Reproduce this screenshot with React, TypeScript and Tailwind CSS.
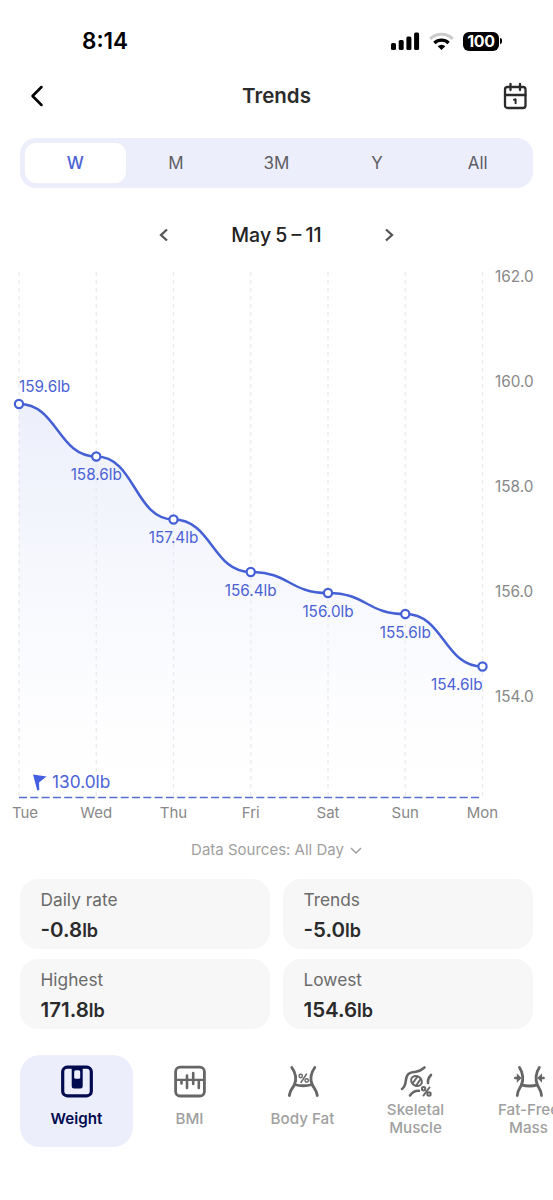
import clsx from "clsx";
import type { ReactNode } from "react";

const ranges = ["W", "M", "3M", "Y", "All"];

const points = [
  { day: "Tue", value: 159.6 },
  { day: "Wed", value: 158.6 },
  { day: "Thu", value: 157.4 },
  { day: "Fri", value: 156.4 },
  { day: "Sat", value: 156.0 },
  { day: "Sun", value: 155.6 },
  { day: "Mon", value: 154.6 },
];

const ticks = [162, 160, 158, 156, 154];

const stats = [
  { label: "Daily rate", value: "-0.8" },
  { label: "Trends", value: "-5.0" },
  { label: "Highest", value: "171.8" },
  { label: "Lowest", value: "154.6" },
];

const metrics: { label: string; icon: ReactNode; active?: boolean }[] = [
  { label: "Weight", icon: <WeightIcon />, active: true },
  { label: "BMI", icon: <BmiIcon /> },
  { label: "Body Fat", icon: <BodyFatIcon /> },
  { label: "Skeletal Muscle", icon: <MuscleIcon /> },
  { label: "Fat-Free Mass", icon: <FatFreeIcon /> },
];

function WeightIcon() {
  return (
    <svg width="36" height="36" viewBox="0 0 36 36" fill="none">
      <rect x="3.7" y="3.2" width="28.6" height="28.6" rx="4.5" stroke="currentColor" strokeWidth="3.2" />
      <path d="M12.7 4h11v18a2.5 2.5 0 0 1-2.5 2.5h-6a2.5 2.5 0 0 1-2.5-2.5z" fill="currentColor" />
      <rect x="15.2" y="6.3" width="6" height="8.5" rx="1.5" fill="#eceefc" />
    </svg>
  );
}

function BmiIcon() {
  return (
    <svg width="36" height="36" viewBox="0 0 36 36" fill="none" stroke="currentColor" strokeWidth="2.8" strokeLinecap="round">
      <rect x="3.6" y="3.2" width="28.8" height="28.8" rx="4.5" />
      <path d="M4 15.8h28" strokeWidth="2.2" />
      <path d="M9.5 16.5v3M15 11.5v12.5M21.200 9v11M26.800 16.500v7.500" strokeWidth="2.600" />
    </svg>
  );
}

function BodyFatIcon() {
  return (
    <svg width="36" height="36" viewBox="0 0 36 36" fill="none" stroke="currentColor" strokeWidth="2.8" strokeLinecap="round">
      <path d="M6.800 3.500c4 5.500 5 12 2.500 17.500-2 3.500-4.500 5.500-5 10.500" />
      <path d="M29.800 3.500c-4 5.500-5 12-2.500 17.500 2 3.500 4.500 5.500 5 10.500" />
      <path d="M9.500 20.500c6 1.700 11.600 1.700 17.600 0" />
      <g strokeWidth="1.400">
        <circle cx="15.700" cy="12" r="1.700" />
        <circle cx="21.700" cy="16.500" r="1.700" />
        <path d="M21.500 10l-5.500 8.500" />
      </g>
    </svg>
  );
}

function MuscleIcon() {
  return (
    <svg width="36" height="36" viewBox="0 0 36 36" fill="none" stroke="currentColor" strokeWidth="2.600" strokeLinecap="round">
      <path d="M4 25c3.500-2.500 3.500-5.500 4-9.500C8.700 9.500 12 8.200 18 7.700c4-.4 6-2 8.500-4.200" />
      <path d="M33 11c-2.300 2.300-3.300 4.500-3 8" />
      <path d="M12 31.500c2.500-3.500 4.500-5 9-4.700" />
      <g strokeWidth="2">
        <ellipse cx="18.500" cy="17" rx="5.700" ry="4.700" transform="rotate(35 18.500 17)" />
        <path d="M19.500 12.500l-4.700 6.500M22.500 15.300l-4.500 6.500" />
        <circle cx="25.600" cy="24.800" r="1.700" />
        <circle cx="31" cy="30" r="1.700" />
        <path d="M31.500 23.500l-6 8" />
      </g>
    </svg>
  );
}

function FatFreeIcon() {
  return (
    <svg width="36" height="36" viewBox="0 0 36 36" fill="none" stroke="currentColor" strokeWidth="2.800" strokeLinecap="round">
      <path d="M8.500 3.500c3.500 5.500 4 12 2 17.500-2 3.500-4 5.500-4.200 10.500" />
      <path d="M28.300 3.500c-3.500 5.500-4 12-2 17.500 2 3.500 4 5.500 4.200 10.500" />
      <path d="M10.500 20.800c5 1.500 10.800 1.500 15.800 0" />
      <path d="M4.200 14h4M32.600 14h-4" strokeWidth="2.500" />
      <path d="M6.500 11L9.500 14l-3 3zM30.300 11L27.300 14l3 3z" fill="currentColor" strokeWidth="1.400" />
    </svg>
  );
}

function StatusBar() {
  return (
    <div className="flex h-[60px] items-center justify-between pl-[82px] pr-[51px] pt-[22px] text-black">
      <span className="text-[22.5px] font-semibold leading-none">8:14</span>
      <div className="flex items-center">
        <svg width="29" height="18" viewBox="0 0 29 18" fill="currentColor">
          <rect x="0" y="11" width="5" height="7" rx="1.500" />
          <rect x="7.700" y="8" width="5" height="10" rx="1.500" />
          <rect x="15.400" y="4.500" width="5" height="13.500" rx="1.500" />
          <rect x="23.100" y="0.500" width="5" height="17.500" rx="1.500" />
        </svg>
        <svg className="ml-[9px]" width="25" height="18" viewBox="0 0 25 18" fill="none" strokeWidth="3.200">
          <path d="M1.300 6.800a16 16 0 0 1 22.400 0" stroke="#cbcbcb" />
          <path d="M5.400 11a10.200 10.200 0 0 1 14.200 0" stroke="currentColor" />
          <path d="M8.700 14.200a5.500 5.500 0 0 1 7.600 0L12.500 18z" fill="currentColor" />
        </svg>
        <div className="ml-[9px] flex h-[19px] w-9 items-center justify-center rounded-[6px] bg-black text-[16px] font-bold leading-[19px] tracking-[-0.3px] text-white">
          100
        </div>
        <div className="ml-px h-[6px] w-[2px] rounded-r-full bg-black" />
      </div>
    </div>
  );
}

function Header() {
  return (
    <div className="flex h-[72px] items-center justify-between pl-[29px] pr-[25px] text-[#2b2b2b]">
      <svg width="22" height="24" viewBox="0 0 22 24" fill="none" stroke="#000" strokeWidth="2.500" strokeLinecap="round" strokeLinejoin="round">
        <path d="M12.500 3L3.500 12l9 9" />
      </svg>
      <h1 className="pt-px text-[20.5px] font-semibold">Trends</h1>
      <svg width="26" height="28" viewBox="0 0 26 28" fill="none" stroke="currentColor" strokeWidth="2.300" strokeLinecap="round" strokeLinejoin="round">
        <rect x="3" y="5" width="20.500" height="21" rx="2.500" />
        <path d="M3 13h20.500M8.500 2v6M18 2v6" />
        <path d="M12 17.700l1.600-.4v4" strokeWidth="2" />
      </svg>
    </div>
  );
}

const TOP = 260;
const BASE = 797.5 - TOP;
const xAt = (i: number) => 19 + i * 77.25;
const yAt = (value: number) => 278 - TOP + (162 - value) * 52.5;

function TrendChart() {
  const line = points.reduce((d, p, i) => {
    if (i === 0) return `M${xAt(0)} ${yAt(p.value)}`;
    const mid = (xAt(i - 1) + xAt(i)) / 2;
    return `${d} C${mid} ${yAt(points[i - 1].value)} ${mid} ${yAt(p.value)} ${xAt(i)} ${yAt(p.value)}`;
  }, "");

  return (
    <svg className="block" width="553" height="570" viewBox="0 0 553 570">
      <defs>
        <linearGradient id="area" x1="0" y1="0" x2="0" y2="1">
          <stop offset="0" stopColor="#4464d8" stopOpacity="0.1" />
          <stop offset="0.4" stopColor="#4464d8" stopOpacity="0.05" />
          <stop offset="0.8" stopColor="#4464d8" stopOpacity="0.01" />
          <stop offset="1" stopColor="#4464d8" stopOpacity="0" />
        </linearGradient>
      </defs>
      <path d={`${line} V${BASE} H${xAt(0)} Z`} fill="url(#area)" />
      {points.map((p, i) => (
        <line key={p.day} x1={xAt(i)} x2={xAt(i)} y1="12" y2={BASE} stroke="#e8e8ee" strokeWidth="1.2" strokeDasharray="4 4" />
      ))}
      <line x1="19" x2="480" y1={BASE} y2={BASE} stroke="#5570d0" strokeWidth="1.7" strokeDasharray="8 3.3" />
      <path d={line} fill="none" stroke="#4460d4" strokeWidth="2.500" />

      {points.map((p, i) => (
        <g key={p.day}>
          <circle cx={xAt(i)} cy={yAt(p.value)} r="4.100" fill="#fff" stroke="#4460d4" strokeWidth="2.200" />
          <text
            x={xAt(i)}
            y={i === 0 ? yAt(p.value) - 12 : yAt(p.value) + 23.5}
            textAnchor={i === 0 ? "start" : i === points.length - 1 ? "end" : "middle"}
            fill="#4b62d5"
            fontSize="15.3"
          >
            {p.value.toFixed(1)}lb
          </text>
          <text x={i === 0 ? 25 : xAt(i)} y="558" textAnchor="middle" fill="#888" fontSize="15">
            {p.day}
          </text>
        </g>
      ))}

      {ticks.map((tick) => (
        <text key={tick} x="495" y={yAt(tick) + 4} fill="#888" fontSize="15.3">
          {tick.toFixed(1)}
        </text>
      ))}

      {/* Goal marker */}
      <path d="M33 514.500l13.500 2-7.500 6 .300 7.500-2 .500z" fill="#4460e0" />
      <text x="52" y="527.500" fill="#4b62d5" fontSize="17.300">
        130.0lb
      </text>
    </svg>
  );
}

export default function App() {
  return (
    <div className="h-[1200px] w-[553px] overflow-hidden bg-white font-['Inter',sans-serif]">
      <StatusBar />
      <Header />

      {/* Range switch */}
      <div className="mx-5 mt-[6px] grid h-[50px] grid-cols-5 rounded-[16px] bg-[#eceefc] p-[5px]">
        {ranges.map((range, index) => (
          <button
            key={range}
            className={clsx(
              "flex items-center justify-center rounded-[11px] pt-[2px] text-[17px]",
              index === 0 ? "bg-white font-medium text-[#4b62d5]" : "text-[#5e5e64]"
            )}
          >
            {range}
          </button>
        ))}
      </div>

      <div className="flex h-[72px] items-center justify-center gap-[61px] pt-[22px] text-[#222]">
        <svg width="12" height="16" viewBox="0 0 12 16" fill="none" stroke="#555" strokeWidth="2.300">
          <path d="M9 2.500L3 8l6 5.500" />
        </svg>
        <span className="pt-px text-[19.5px] font-medium [word-spacing:-1px]">May 5 – 11</span>
        <svg width="12" height="16" viewBox="0 0 12 16" fill="none" stroke="#555" strokeWidth="2.300">
          <path d="M3 2.500L9 8l-6 5.500" />
        </svg>
      </div>

      <TrendChart />

      <div className="flex h-[49px] items-center justify-center gap-1.5 pb-2 text-[15px] text-[#a0a0a0]">
        Data Sources: All Day
        <svg width="12" height="8" viewBox="0 0 12 8" fill="none" stroke="currentColor" strokeWidth="1.500">
          <path d="M1 1l5 5 5-5" />
        </svg>
      </div>

      {/* Stats */}
      <div className="mx-5 grid grid-cols-2 gap-x-[13px] gap-y-[10px]">
        {stats.map((stat) => (
          <div key={stat.label} className="h-[70px] rounded-[18px] bg-[#f7f7f7] pl-[20.5px] pt-2">
            <p className="text-[17.3px] leading-[26px] text-[#6a6a6a]">{stat.label}</p>
            <p className="text-[20.5px] font-semibold leading-[33px] text-[#2b2b2b]">
              {stat.value}
              <span className="text-[18px]">lb</span>
            </p>
          </div>
        ))}
      </div>

      {/* Metric tabs */}
      <div className="ml-5 mt-[26px] flex">
        {metrics.map((metric) => (
          <div
            key={metric.label}
            className={clsx(
              "flex h-[92px] w-[113px] shrink-0 flex-col items-center rounded-[20px] pt-[9px]",
              metric.active ? "bg-[#eceefc] text-[#000a4f]" : "text-[#666]"
            )}
          >
            {metric.icon}
            <div
              className={clsx(
                "flex h-[37px] w-20 items-center justify-center text-center text-[15.2px] leading-[17.5px]",
                metric.active ? "font-semibold" : "font-medium text-[#a0a0a0]"
              )}
            >
              {metric.label}
            </div>
          </div>
        ))}
      </div>
    </div>
  );
}
